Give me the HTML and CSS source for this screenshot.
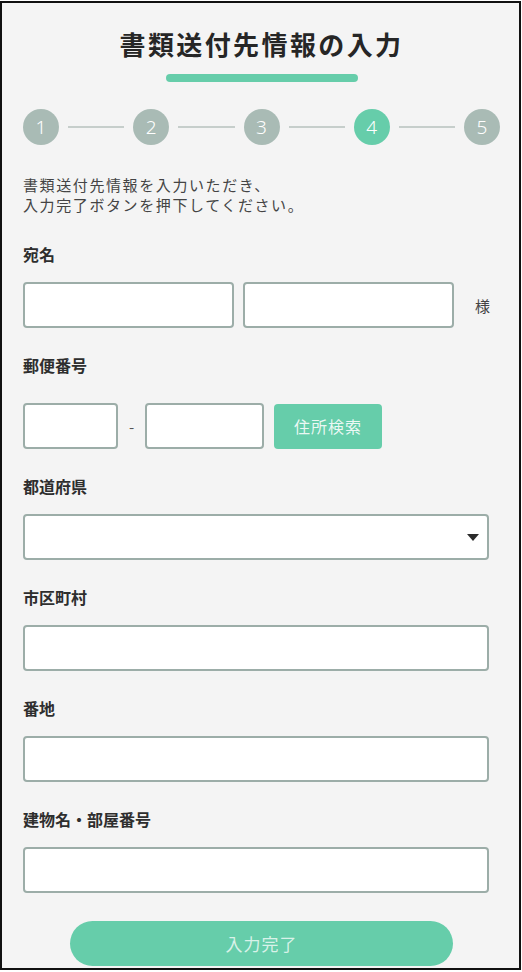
FILE: index.html
```html
<!DOCTYPE html>
<html lang="ja">
<head>
<meta charset="utf-8">
<title>書類送付先情報の入力</title>
<link rel="stylesheet" href="styles.css">
</head>
<body>
<div class="frame">
  <h1 class="title">書類送付先情報の入力</h1>
  <div class="title-bar"></div>

  <ol class="steps">
    <li class="step">1</li>
    <li class="step-line"></li>
    <li class="step">2</li>
    <li class="step-line"></li>
    <li class="step">3</li>
    <li class="step-line"></li>
    <li class="step step-active">4</li>
    <li class="step-line"></li>
    <li class="step">5</li>
  </ol>

  <p class="lead">書類送付先情報を入力いただき、<br>入力完了ボタンを押下してください。</p>

  <div class="field">
    <div class="label">宛名</div>
    <div class="row">
      <input class="input input-name" type="text">
      <input class="input input-name" type="text">
      <span class="suffix">様</span>
    </div>
  </div>

  <div class="field">
    <div class="label">郵便番号</div>
    <div class="row row-postal">
      <input class="input input-zip1" type="text">
      <span class="dash">-</span>
      <input class="input input-zip2" type="text">
      <button class="btn-search" type="button">住所検索</button>
    </div>
  </div>

  <div class="field">
    <div class="label">都道府県</div>
    <div class="select-wrap">
      <select class="input select"><option></option></select>
      <span class="select-arrow"></span>
    </div>
  </div>

  <div class="field">
    <div class="label">市区町村</div>
    <input class="input input-full" type="text">
  </div>

  <div class="field">
    <div class="label">番地</div>
    <input class="input input-full" type="text">
  </div>

  <div class="field">
    <div class="label">建物名・部屋番号</div>
    <input class="input input-full" type="text">
  </div>

  <button class="btn-submit" type="button">入力完了</button>
</div>
</body>
</html>
```
FILE: styles.css
```css
* { box-sizing: border-box; }
html, body {
  margin: 0;
  padding: 0;
  background: #ffffff;
}
body {
  font-family: "Noto Sans CJK JP", "Noto Sans", sans-serif;
  color: #333;
}
.frame {
  width: 521px;
  height: 969px;
  margin-top: 1px;
  border: 2px solid #111;
  background: #f4f4f4;
  padding: 23px 19px 0 21px;
  display: flex;
  flex-direction: column;
  overflow: hidden;
}
.title {
  margin: 0;
  font-size: 26px;
  line-height: 36px;
  font-weight: 700;
  letter-spacing: 2.4px;
  text-align: center;
  color: #262626;
}
.title-bar {
  align-self: center;
  width: 192px;
  height: 8px;
  margin-top: 12px;
  border-radius: 4px;
  background: #66cdaa;
}
.steps {
  list-style: none;
  margin: 27px 0 0;
  padding: 0;
  display: flex;
  align-items: center;
}
.step {
  width: 36px;
  height: 36px;
  flex: none;
  border-radius: 50%;
  background: #a9bbb5;
  color: #fff;
  font-family: "Noto Sans", sans-serif;
  font-weight: 300;
  font-size: 19px;
  line-height: 36px;
  text-align: center;
}
.step-active {
  background: #66cdaa;
}
.step-line {
  flex: 1;
  height: 2px;
  margin: 0 9px;
  background: #c6cecb;
}
.lead {
  margin: 30px 0 0;
  font-size: 15px;
  line-height: 20px;
  letter-spacing: 1.6px;
  color: #444;
}
.field {
  margin-top: 25px;
  display: flex;
  flex-direction: column;
}
.lead + .field {
  margin-top: 27px;
}
.label {
  font-size: 16px;
  line-height: 24px;
  font-weight: 700;
  color: #2e2e2e;
  margin-bottom: 16px;
}
.row {
  display: flex;
  align-items: center;
}
.row-postal {
  margin-top: 10px;
}
.input {
  height: 46px;
  border: 2px solid #9cada8;
  border-radius: 4px;
  background: #fff;
  margin: 0;
  padding: 0 10px;
  font-family: inherit;
  font-size: 16px;
  outline: none;
}
.input-name {
  width: 211px;
}
.input-name + .input-name {
  margin-left: 9px;
}
.suffix {
  margin-left: 21px;
  font-size: 15px;
  color: #444;
}
.input-zip1 {
  width: 95px;
}
.dash {
  width: 27px;
  text-align: center;
  font-size: 15px;
  color: #555;
}
.input-zip2 {
  width: 119px;
}
.btn-search {
  margin-left: 10px;
  width: 108px;
  height: 45px;
  border: none;
  border-radius: 4px;
  background: #66cdaa;
  color: rgba(255, 255, 255, 0.88);
  font-family: inherit;
  font-size: 16px;
  letter-spacing: 1px;
  padding: 0;
}
.select-wrap {
  position: relative;
  width: 466px;
}
.select {
  width: 466px;
  appearance: none;
  -webkit-appearance: none;
}
.select-arrow {
  position: absolute;
  right: 10px;
  top: 20px;
  width: 0;
  height: 0;
  border-left: 6px solid transparent;
  border-right: 6px solid transparent;
  border-top: 7px solid #2b2b2b;
}
.input-full {
  width: 466px;
}
.btn-submit {
  align-self: center;
  margin-top: 28px;
  width: 383px;
  height: 45px;
  border: none;
  border-radius: 23px;
  background: #66cdaa;
  color: rgba(255, 255, 255, 0.75);
  font-family: inherit;
  font-size: 17px;
  letter-spacing: 1px;
  padding: 0;
}
```
